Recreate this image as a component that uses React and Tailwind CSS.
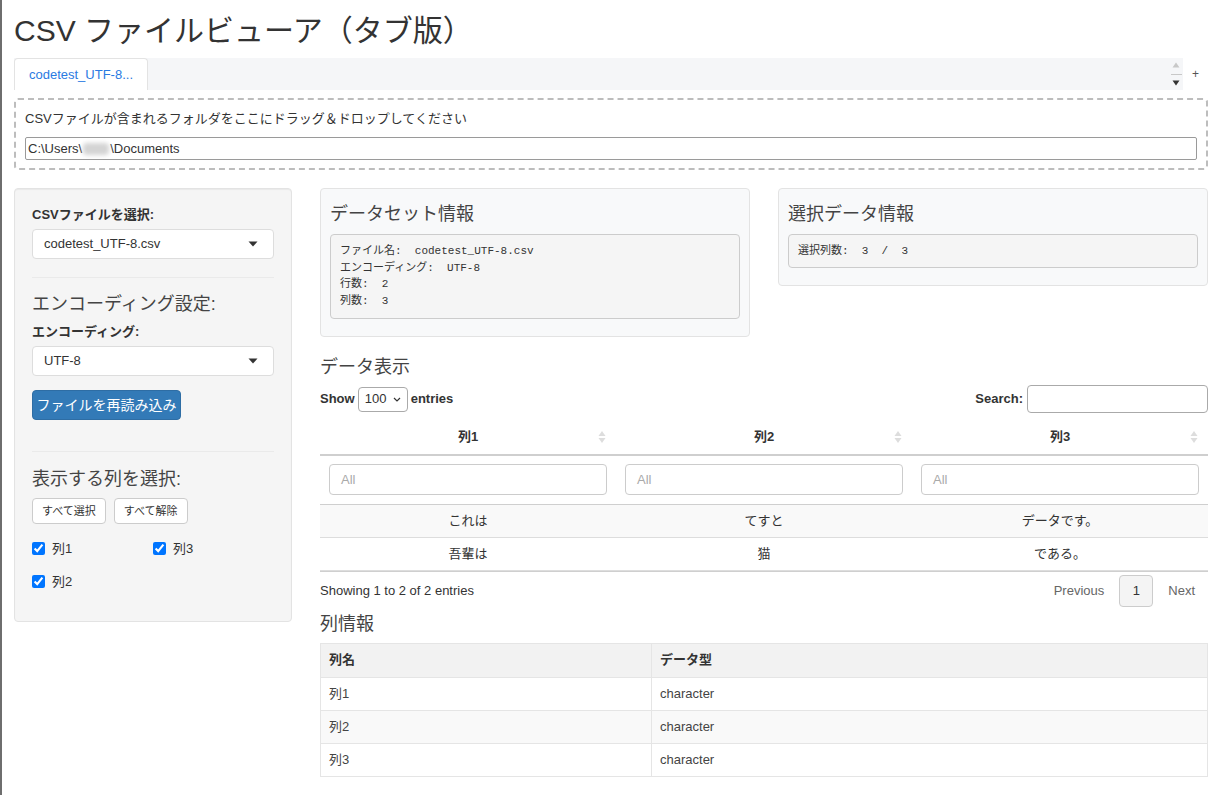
import React, { useState } from 'react';

const sans = '"Liberation Sans", "Noto Sans CJK JP", sans-serif';
const mono = '"Liberation Mono", "Noto Sans CJK JP", monospace';

const rows = [
  ['これは', 'てすと', 'データです。'],
  ['吾輩は', '猫', 'である。'],
];

const colInfo = [
  ['列1', 'character'],
  ['列2', 'character'],
  ['列3', 'character'],
];

const Caret = () => (
  <svg width="10" height="6" viewBox="0 0 10 6" className="shrink-0">
    <path d="M0.5 0.5h9L5 5.5z" fill="#333" />
  </svg>
);

const SortIcon = () => (
  <svg width="8" height="14" viewBox="0 0 8 14" className="shrink-0">
    <path d="M4 1L7.5 6h-7z" fill="#ddd" />
    <path d="M4 13L7.5 8h-7z" fill="#ddd" />
  </svg>
);

const SelectBox = ({ value }) => (
  <div className="flex h-[30px] items-center justify-between rounded border border-[#ddd] bg-white pl-[11px] pr-[15px] text-[13px] text-[#333]">
    <span>{value}</span>
    <Caret />
  </div>
);

const Check = ({ label, checked, onChange }) => (
  <label className="flex items-center gap-[7px] text-[13px] text-[#333]">
    <input type="checkbox" checked={checked} onChange={onChange} className="h-[13px] w-[13px] accent-[#0075ff]" />
    {label}
  </label>
);

export default function App() {
  const [cols, setCols] = useState({ c1: true, c2: true, c3: true });
  const toggle = (k) => setCols({ ...cols, [k]: !cols[k] });

  return (
    <div className="min-h-[795px] border-l-2 border-[#6e6e6e] bg-white text-[#333]" style={{ fontFamily: sans }}>
      <div className="pl-[12px] pr-[12px]">
        <h2 className="pt-[14px] text-[30px] leading-[33px] font-normal">CSV ファイルビューア（タブ版）</h2>

        {/* tabs */}
        <div className="mt-[11px] flex h-[32px] items-stretch">
          <div className="flex flex-1 items-stretch bg-[#f5f6f8]">
            <div className="flex w-[134px] items-center justify-center rounded-t border border-b-0 border-[#e3e3e3] bg-white text-[13px] text-[#2a7ae2]">
              codetest_UTF-8...
            </div>
            <div className="flex-1" />
            <div className="flex w-[14px] flex-col items-center justify-between py-[4px]">
              <svg width="8" height="6" viewBox="0 0 8 6"><path d="M4 0.5L7.5 5.5h-7z" fill="#c8c8c8" /></svg>
              <div className="h-[1px] w-[11px] bg-[#c8c8c8]" />
              <svg width="8" height="6" viewBox="0 0 8 6"><path d="M0.5 0.5h7L4 5.5z" fill="#333" /></svg>
            </div>
          </div>
          <div className="flex w-[25px] items-center justify-center text-[12px] text-[#555]">+</div>
        </div>

        {/* drop zone */}
        <div className="mt-[8px] rounded-[4px] border-2 border-dashed border-[#bdbdbd] px-[9px] pt-[10px] pb-[8px]">
          <div className="text-[13px] leading-[18px]">CSVファイルが含まれるフォルダをここにドラッグ＆ドロップしてください</div>
          <div className="mt-[9px] flex h-[23px] items-center rounded-[2px] border border-[#9a9a9a] bg-white px-[2px] text-[13px]">
            C:\Users\
            <span className="mx-[1px] inline-block h-[12px] w-[26px] rounded bg-[#d4d4d4] blur-[2px]" />
            \Documents
          </div>
        </div>

        <div className="mt-[18px] flex items-start gap-[28px]">
          {/* sidebar */}
          <div className="w-[278px] shrink-0 rounded border border-[#e3e3e3] bg-[#f5f5f5] px-[17px] pt-[17px] pb-[30px] shadow-[inset_0_1px_1px_rgba(0,0,0,0.05)]">
            <div className="text-[13px] font-bold leading-[18px]">CSVファイルを選択:</div>
            <div className="mt-[5px]"><SelectBox value="codetest_UTF-8.csv" /></div>
            <hr className="mt-[18px] border-[#eaeaea]" />
            <div className="mt-[15px] text-[18px] leading-[22px] text-[#444]">エンコーディング設定:</div>
            <div className="mt-[8px] text-[13px] font-bold leading-[18px]">エンコーディング:</div>
            <div className="mt-[5px]"><SelectBox value="UTF-8" /></div>
            <button className="mt-[14px] flex h-[30px] w-[149px] items-center justify-center rounded border border-[#2e6da4] bg-[#337ab7] text-[14px] text-white">
              ファイルを再読み込み
            </button>
            <hr className="mt-[31px] border-[#eaeaea]" />
            <div className="mt-[16px] text-[18px] leading-[22px] text-[#444]">表示する列を選択:</div>
            <div className="mt-[8px] flex gap-[8px]">
              <button className="h-[26px] rounded border border-[#ccc] bg-white px-[9px] text-[11px] text-[#333]">すべて選択</button>
              <button className="h-[26px] rounded border border-[#ccc] bg-white px-[9px] text-[11px] text-[#333]">すべて解除</button>
            </div>
            <div className="mt-[15px] grid grid-cols-2 gap-y-[13px]">
              <Check label="列1" checked={cols.c1} onChange={() => toggle('c1')} />
              <Check label="列3" checked={cols.c3} onChange={() => toggle('c3')} />
              <Check label="列2" checked={cols.c2} onChange={() => toggle('c2')} />
            </div>
          </div>

          {/* main */}
          <div className="flex-1">
            <div className="flex items-start gap-[28px]">
              <div className="w-[430px] rounded border border-[#e3e3e3] bg-[#f8f9fa] px-[9px] pt-[14px] pb-[17px]">
                <div className="text-[18px] leading-[22px] text-[#444]">データセット情報</div>
                <pre className="mt-[9px] rounded border border-[#ccc] bg-[#f5f5f5] px-[9px] pt-[8px] pb-[9px] text-[11px] leading-[16.5px] text-[#333]" style={{ fontFamily: mono }}>
{`ファイル名:  codetest_UTF-8.csv
エンコーディング:  UTF-8
行数:  2
列数:  3`}
                </pre>
              </div>
              <div className="flex-1 rounded border border-[#e3e3e3] bg-[#f8f9fa] px-[9px] pt-[14px] pb-[17px]">
                <div className="text-[18px] leading-[22px] text-[#444]">選択データ情報</div>
                <pre className="mt-[9px] rounded border border-[#ccc] bg-[#f5f5f5] px-[9px] pt-[8px] pb-[7px] text-[11px] leading-[16.5px] text-[#333]" style={{ fontFamily: mono }}>
{`選択列数:  3  /  3`}
                </pre>
              </div>
            </div>

            <div className="mt-[19px] text-[18px] leading-[22px] text-[#444]">データ表示</div>

            <div className="mt-[7px] flex items-center justify-between">
              <div className="flex items-center gap-[3px] text-[13px] font-bold">
                Show
                <div className="flex h-[25px] w-[50px] items-center justify-between rounded border border-[#aaa] bg-white px-[6px] text-[13px] font-normal">
                  100
                  <svg width="8" height="5" viewBox="0 0 8 5"><path d="M1 1l3 3 3-3" stroke="#333" strokeWidth="1.2" fill="none" /></svg>
                </div>
                entries
              </div>
              <div className="flex items-center gap-[4px] text-[13px] font-bold">
                Search:
                <div className="h-[28px] w-[181px] rounded border border-[#aaa] bg-white" />
              </div>
            </div>

            <table className="mt-[6px] w-full table-fixed border-collapse text-[13px]">
              <thead>
                <tr className="h-[36px] border-b-2 border-[#cfcfcf]">
                  {['列1', '列2', '列3'].map((h) => (
                    <th key={h} className="relative px-[10px] text-center font-bold">
                      {h}
                      <span className="absolute right-[10px] top-1/2 -translate-y-1/2"><SortIcon /></span>
                    </th>
                  ))}
                </tr>
                <tr className="h-[49px] border-b border-[#cfcfcf]">
                  {[1, 2, 3].map((i) => (
                    <td key={i} className="px-[9px]">
                      <div className="flex h-[31px] items-center rounded border border-[#ccc] bg-white px-[11px] text-[13px] text-[#aaa]">All</div>
                    </td>
                  ))}
                </tr>
              </thead>
              <tbody>
                {rows.map((r, i) => (
                  <tr key={i} className={`h-[33px] border-b border-[#ddd] ${i % 2 === 0 ? 'bg-[#f9f9f9]' : 'bg-white'}`}>
                    {r.map((c, j) => (
                      <td key={j} className="text-center">{c}</td>
                    ))}
                  </tr>
                ))}
              </tbody>
            </table>
            <div className="h-[1px] bg-[#cfcfcf]" />

            <div className="mt-[3px] flex items-center justify-between text-[13px]">
              <div>Showing 1 to 2 of 2 entries</div>
              <div className="flex items-center text-[#666]">
                <span className="px-[15px]">Previous</span>
                <span className="flex h-[32px] w-[34px] items-center justify-center rounded border border-[#ccc] bg-[#f4f4f4] text-[#333]">1</span>
                <span className="px-[15px] pr-[13px]">Next</span>
              </div>
            </div>

            <div className="mt-[6px] text-[18px] leading-[22px] text-[#444]">列情報</div>

            <table className="mt-[8px] w-full border-collapse text-[13px]">
              <thead>
                <tr className="h-[34px] bg-[#f2f2f2]">
                  <th className="w-[331px] border border-[#e5e5e5] px-[8px] text-left font-bold">列名</th>
                  <th className="border border-[#e5e5e5] px-[8px] text-left font-bold">データ型</th>
                </tr>
              </thead>
              <tbody>
                {colInfo.map(([n, t], i) => (
                  <tr key={n} className={`h-[33px] ${i % 2 === 1 ? 'bg-[#f9f9f9]' : 'bg-white'}`}>
                    <td className="border border-[#e5e5e5] px-[8px] text-[#444]">{n}</td>
                    <td className="border border-[#e5e5e5] px-[8px] text-[#444]">{t}</td>
                  </tr>
                ))}
              </tbody>
            </table>
          </div>
        </div>
      </div>
    </div>
  );
}
